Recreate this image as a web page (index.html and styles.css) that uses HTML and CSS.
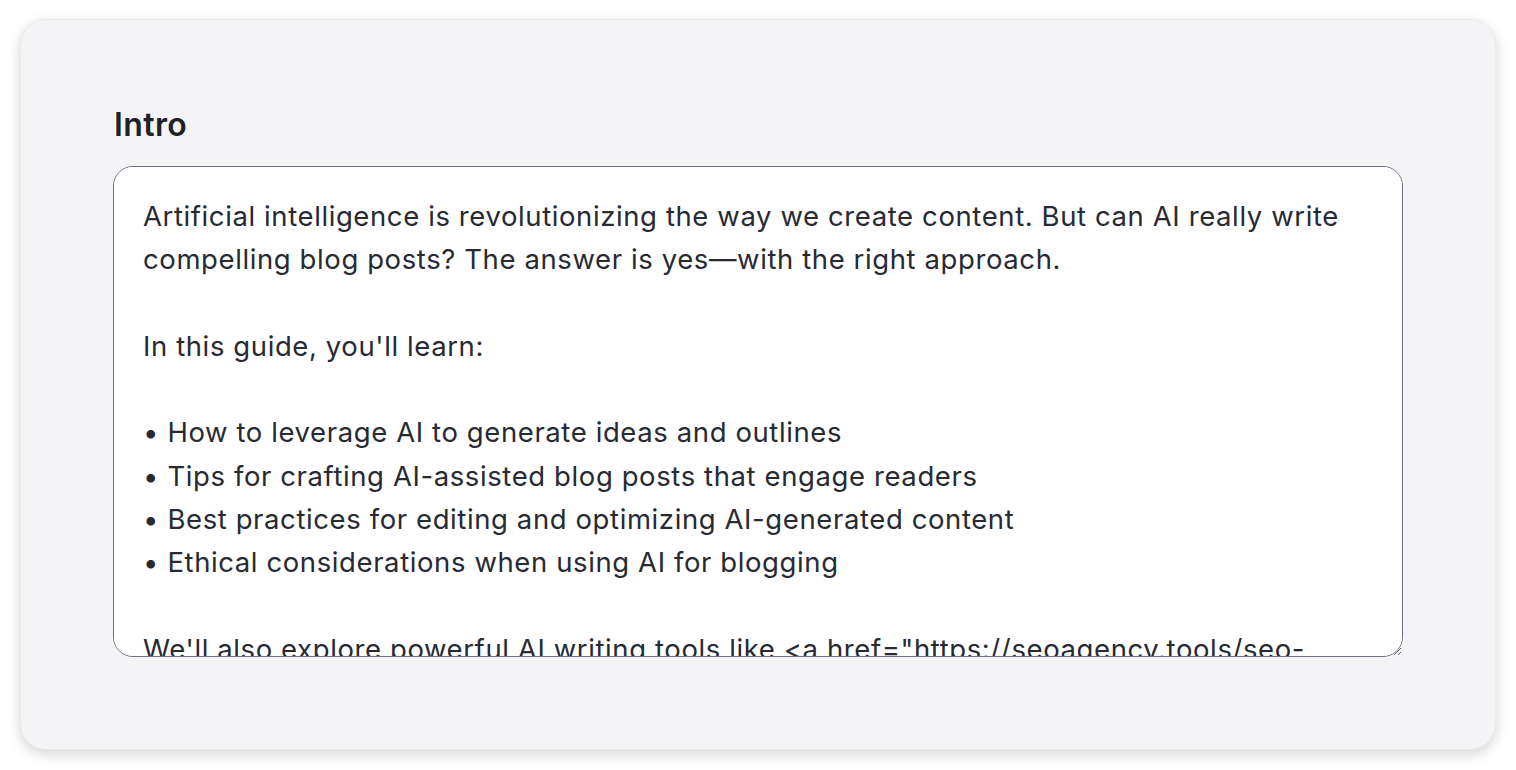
FILE: index.html
```html
<!DOCTYPE html>
<html lang="en">
<head>
  <meta charset="UTF-8" />
  <meta name="viewport" content="width=device-width, initial-scale=1.0" />
  <title>Intro</title>
  <link rel="stylesheet" href="styles.css">
</head>
<body>

<div class="card">
  <label for="intro" class="field-label">Intro</label>
  <textarea id="intro" class="intro-box">Artificial intelligence is revolutionizing the way we create content. But can AI really write compelling blog posts? The answer is yes—with the right approach.

In this guide, you'll learn:

• How to leverage AI to generate ideas and outlines
• Tips for crafting AI-assisted blog posts that engage readers
• Best practices for editing and optimizing AI-generated content
• Ethical considerations when using AI for blogging

We'll also explore powerful AI writing tools like <a href="https://seoagency.tools/seo-content-writer">SEO Content Writer</a> that can help you produce high-quality posts faster.

Let's dive in!</textarea>
</div>

</body>
</html>
```

FILE: styles.css
```css
body {
  margin: 0;
  padding: 19px 20px;
  background: #fff;
  font-family: Inter, "Noto Sans", sans-serif;
}

.card {
  background: #f4f4f6;
  border: 1px solid #ebebee;
  border-radius: 26px;
  box-shadow: 0 4px 14px rgba(0,0,0,.17);
  padding: 87px 92px 92px;
  display: flex;
  flex-direction: column;
  gap: 23px;
}

.field-label {
  font-size: 32px;
  line-height: 36px;
  font-weight: 600;
  letter-spacing: 0.4px;
  color: #1f2129;
  padding-left: 1px;
}

.intro-box {
  display: block;
  height: 491px;
  box-sizing: border-box;
  padding: 28px 29px;
  border: 1px solid #6b7080;
  border-radius: 20px;
  background: #fff;
  font-family: Inter, "Noto Sans", sans-serif;
  font-size: 27.5px;
  line-height: 43.3px;
  letter-spacing: 0.6px;
  color: #272a33;
  resize: vertical;
  scrollbar-width: none;
  outline: none;
}
```
